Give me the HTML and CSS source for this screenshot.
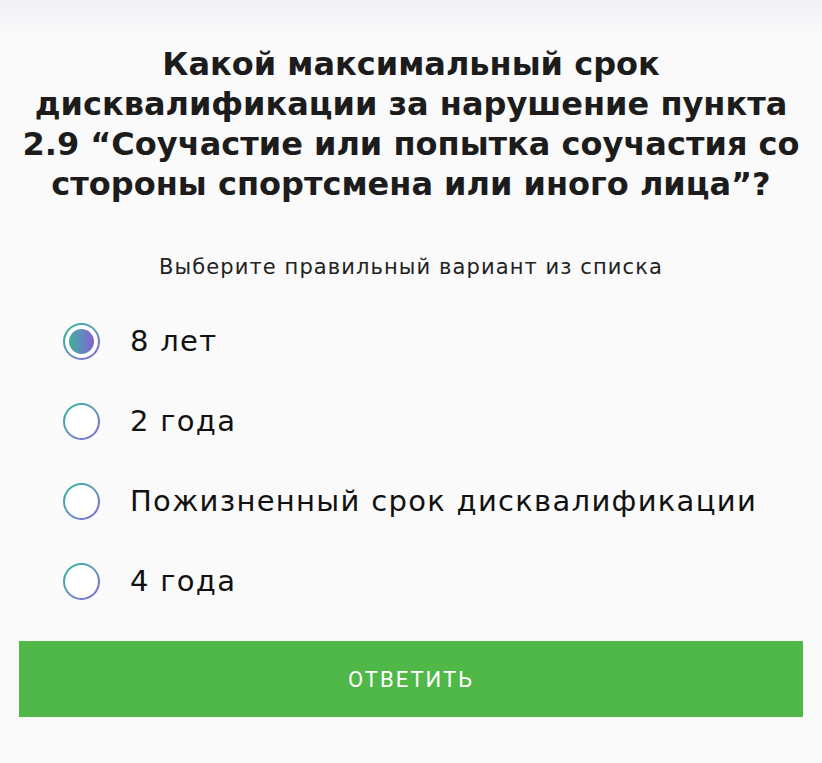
FILE: index.html
```html
<!DOCTYPE html>
<html lang="ru">
<head>
<meta charset="utf-8">
<title>Вопрос</title>
<link rel="stylesheet" href="styles.css">
</head>
<body>
<div class="page">
  <h1 class="title">Какой максимальный срок дисквалификации за нарушение пункта 2.9 “Соучастие или попытка соучастия со стороны спортсмена или иного лица”?</h1>
  <p class="subtitle">Выберите правильный вариант из списка</p>
  <ul class="options">
    <li class="option checked"><span class="radio"><span class="dot"></span></span><span class="label">8 лет</span></li>
    <li class="option"><span class="radio"></span><span class="label">2 года</span></li>
    <li class="option"><span class="radio"></span><span class="label">Пожизненный срок дисквалификации</span></li>
    <li class="option"><span class="radio"></span><span class="label">4 года</span></li>
  </ul>
  <button class="answer">ОТВЕТИТЬ</button>
</div>
</body>
</html>
```

FILE: styles.css
```css
html, body {
  margin: 0;
  padding: 0;
}
body {
  background: #fafafa;
  font-family: "DejaVu Sans", "Noto Sans", sans-serif;
  color: #111;
  width: 822px;
  height: 763px;
  overflow: hidden;
}
.page {
  background: linear-gradient(to bottom, #f3f1f8 0px, #fafafa 36px);
  padding: 44px 19px 0;
  height: 763px;
  box-sizing: border-box;
}
.title {
  margin: 0;
  font-size: 32px;
  line-height: 40px;
  font-weight: 700;
  text-align: center;
  color: #1c1c1c;
}
.subtitle {
  margin: 49px 0 0;
  font-size: 21px;
  line-height: 28px;
  letter-spacing: 1.1px;
  text-align: center;
  color: #222;
}
.options {
  list-style: none;
  margin: 20px 0 0;
  padding: 0 0 0 44px;
}
.option {
  height: 80px;
  display: flex;
  align-items: center;
  gap: 30px;
}
.radio {
  width: 37px;
  height: 37px;
  border-radius: 50%;
  box-sizing: border-box;
  background: linear-gradient(135deg, #2db39a 0%, #5f97bd 50%, #8a5cd8 100%);
  display: flex;
  align-items: center;
  justify-content: center;
  position: relative;
}
.radio::before {
  content: "";
  position: absolute;
  inset: 2px;
  border-radius: 50%;
  background: #fff;
}
.dot {
  width: 25px;
  height: 25px;
  border-radius: 50%;
  background: linear-gradient(90deg, #3fb09a 0%, #6a83c2 60%, #8360d0 100%);
  position: relative;
}
.label {
  font-size: 29px;
  line-height: 36px;
  letter-spacing: 1.3px;
  color: #111;
}
.answer {
  display: block;
  width: 100%;
  height: 76px;
  margin-top: 20px;
  border: none;
  background: #4fb848;
  color: #fff;
  font-family: Roboto, "Noto Sans", sans-serif;
  font-size: 22px;
  letter-spacing: 2px;
}
```
